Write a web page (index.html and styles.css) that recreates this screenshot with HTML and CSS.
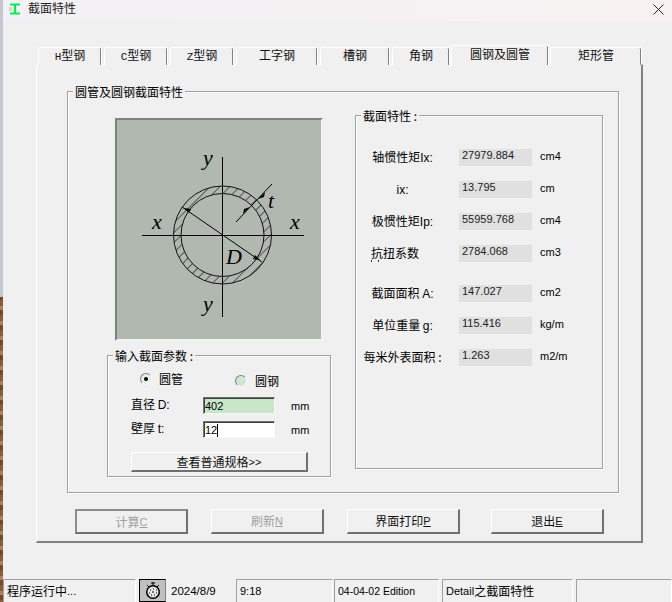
FILE: index.html
```html
<!DOCTYPE html>
<html lang="zh-CN">
<head>
<meta charset="utf-8">
<title>截面特性</title>
<link rel="stylesheet" href="styles.css">
</head>
<body>
<div class="screen">
  <div class="desktop-strip"></div>
  <div class="window">
    <header class="titlebar">
      <svg class="app-icon" width="12" height="12" viewBox="0 0 12 12">
        <path d="M1 1.5h10M1 10.5h10M6 1.5v9" stroke="#00f050" stroke-width="2.2" fill="none"/>
        <path d="M0 5h3M0 7h3" stroke="#e8a8a8" stroke-width="1"/>
      </svg>
      <span class="title-text">截面特性</span>
      <svg class="close-icon" width="11" height="11" viewBox="0 0 11 11">
        <path d="M.5 .5l10 10M10.5 .5l-10 10" stroke="#222" stroke-width="1" fill="none"/>
      </svg>
    </header>

    <main class="client">
      <nav class="tabs">
        <div class="tab"><span class="mono">H</span>型钢</div>
        <div class="tab"><span class="mono">C</span>型钢</div>
        <div class="tab"><span class="mono">Z</span>型钢</div>
        <div class="tab">工字钢</div>
        <div class="tab">槽钢</div>
        <div class="tab">角钢</div>
        <div class="tab active">圆钢及圆管</div>
        <div class="tab">矩形管</div>
      </nav>

      <section class="panel">
        <div class="group main-group">
          <div class="legend">圆管及圆钢截面特性</div>
          <div class="main-content">
            <div class="left-col">
              <div class="picture">
                <svg class="diagram" width="204" height="219" viewBox="117 120 204 219">
                  <defs>
                    <pattern id="hatch" width="7" height="7" patternUnits="userSpaceOnUse" patternTransform="rotate(45)">
                      <line x1="0" y1="0" x2="0" y2="7" stroke="#111" stroke-width="1.2"/>
                    </pattern>
                  </defs>
                  <path d="M173.5 235a49 49 0 1 0 98 0a49 49 0 1 0 -98 0zM181 235a41.5 41.5 0 1 1 83 0a41.5 41.5 0 1 1 -83 0z" fill="url(#hatch)" fill-rule="evenodd"/>
                  <circle cx="222.5" cy="235" r="49" fill="none" stroke="#111"/>
                  <circle cx="222.5" cy="235" r="41.5" fill="none" stroke="#111"/>
                  <g stroke="#000" stroke-width="1" shape-rendering="crispEdges">
                    <line x1="142" y1="235.5" x2="304" y2="235.5"/>
                    <line x1="222.5" y1="157" x2="222.5" y2="317"/>
                  </g>
                  <g stroke="#000" stroke-width="1">
                    <line x1="182" y1="207" x2="262" y2="262"/>
                    <line x1="236" y1="222" x2="272" y2="184"/>
                  </g>
                  <g fill="#000">
                    <path d="M184 208l7 1-2 4z"/>
                    <path d="M260 260l-7-1 2-4z"/>
                    <path d="M250 207l-7 7 1-5z"/>
                    <path d="M258 199l7-7-1 5z"/>
                  </g>
                  <g class="math">
                    <text x="203" y="165">y</text>
                    <text x="203" y="311">y</text>
                    <text x="152" y="229">x</text>
                    <text x="290" y="229">x</text>
                    <text x="268" y="208">t</text>
                    <text x="226" y="264">D</text>
                  </g>
                </svg>
              </div>

              <div class="group input-group">
                <div class="legend">输入截面参数 :</div>
                <div class="radio-row">
                  <label class="radio-item">
                    <span class="radio checked"></span>
                    <span>圆管</span>
                  </label>
                  <label class="radio-item lower">
                    <span class="radio tinted"></span>
                    <span>圆钢</span>
                  </label>
                </div>
                <div class="field-grid">
                  <span class="f-label">直径 <span class="lbl">D:</span></span>
                  <div class="field tinted-field"><span class="lat">402</span></div>
                  <span class="f-unit lat">mm</span>
                  <span class="f-label">壁厚 <span class="lbl">t:</span></span>
                  <div class="field"><span class="lat">12</span><span class="caret"></span></div>
                  <span class="f-unit lat">mm</span>
                </div>
                <div class="button wide">查看普通规格<span class="lat">&gt;&gt;</span></div>
              </div>
            </div>

            <div class="group result-group">
              <div class="legend">截面特性 :</div>
              <div class="result-grid">
                <span class="r-label">轴惯性矩<span class="lbl">Ix:</span></span>
                <span class="r-value">27979.884</span>
                <span class="r-unit">cm4</span>

                <span class="r-label"><span class="lbl">ix:</span></span>
                <span class="r-value">13.795</span>
                <span class="r-unit">cm</span>

                <span class="r-label">极惯性矩<span class="lbl">Ip:</span></span>
                <span class="r-value">55959.768</span>
                <span class="r-unit">cm4</span>

                <span class="r-label specks">抗扭系数</span>
                <span class="r-value">2784.068</span>
                <span class="r-unit">cm3</span>

                <span class="r-label spaced">截面面积 <span class="lbl">A:</span></span>
                <span class="r-value spaced">147.027</span>
                <span class="r-unit spaced">cm2</span>

                <span class="r-label">单位重量 <span class="lbl">g:</span></span>
                <span class="r-value">115.416</span>
                <span class="r-unit">kg/m</span>

                <span class="r-label">每米外表面积 :</span>
                <span class="r-value">1.263</span>
                <span class="r-unit narrow">m2/m</span>
              </div>
            </div>
          </div>
        </div>

        <div class="actions">
          <div class="button action default disabled">计算<u class="lat">C</u></div>
          <div class="button action disabled">刷新<u class="lat">N</u></div>
          <div class="button action">界面打印<u class="lat">P</u></div>
          <div class="button action exit">退出<u class="lat">E</u></div>
        </div>
      </section>
    </main>

    <footer class="statusbar">
      <div class="cell c-status">程序运行中<span class="lat">...</span></div>
      <div class="cell c-clock">
        <div class="clock-box">
          <svg width="18" height="18" viewBox="0 0 18 18">
            <path d="M9 0v3M7 1h4" stroke="#000" fill="none"/>
            <path d="M3 3l2 2M15 3l-2 2" stroke="#000" fill="none"/>
            <circle cx="9" cy="10" r="7" fill="#000"/>
            <circle cx="9" cy="10" r="5.5" fill="#e8e8e8"/>
            <path d="M6 8h1M9 7h1M12 8h1M5 11h1M8 10h2M12 11h1M7 13h1M10 13h1" stroke="#000"/>
          </svg>
        </div>
        <span class="date">2024/8/9</span>
      </div>
      <div class="cell c-time lat">9:18</div>
      <div class="cell c-edition">04-04-02 Edition</div>
      <div class="cell c-detail"><span class="lat">Detail</span>之截面特性</div>
      <div class="cell c-end"></div>
    </footer>
  </div>
</div>
</body>
</html>
```

FILE: styles.css
```css
* { box-sizing: border-box; }

html, body {
  margin: 0;
  padding: 0;
  height: 100%;
  overflow: hidden;
}

body {
  font-family: "Noto Sans CJK SC", "Liberation Sans", sans-serif;
  font-size: 12px;
  line-height: 14px;
  color: #000;
  background: #f0f0f0;
}

.lat {
  font-family: "Liberation Sans", sans-serif;
  font-size: 11px;
}

.lbl {
  font-family: "Liberation Sans", sans-serif;
  font-size: 12px;
}

.mono {
  font-family: "Liberation Mono", monospace;
  font-size: 11px;
}

.screen {
  display: flex;
  width: 672px;
  height: 602px;
}

.desktop-strip {
  flex: 0 0 3px;
  background:
    linear-gradient(#c5c8d0 0 297px, transparent 297px),
    repeating-linear-gradient(#8d5c35 0 6px, #a9825c 6px 10px, #734a2a 10px 15px);
}

.window {
  flex: 1;
  display: flex;
  flex-direction: column;
  min-width: 0;
  background: #f0f0f0;
}

/* Title bar */
.titlebar {
  flex: 0 0 21px;
  display: flex;
  align-items: center;
  padding: 0 8px 5px 6px;
  background: linear-gradient(90deg, #f2f1f5, #f8f2f2);
}

.app-icon { flex: none; margin-top: 2px; }

.title-text { margin-left: 7px; color: #222; }

.close-icon { margin-left: auto; margin-top: 2px; }

/* Client area */
.client {
  flex: 1;
  padding: 24px 0 0 33px;
  min-height: 0;
}

.tabs {
  display: grid;
  grid-template-columns: 64px 64px 64px 82px 70px 58px 96px 92px;
  column-gap: 2px;
  align-items: end;
  height: 20px;
  margin-left: 2px;
  margin-bottom: -1px;
  position: relative;
  z-index: 1;
}

.tab {
  height: 18px;
  text-align: center;
  border-top: 1px solid #fff;
  border-left: 1px solid #fff;
  border-right: 1px solid #fff;
  box-shadow: inset -1px 0 0 #808080;
  border-top-left-radius: 2px;
  border-top-right-radius: 2px;
  background: #f0f0f0;
  color: #111;
}

.tab.active {
  height: 20px;
  margin: 0 -1px;
  padding-top: 1px;
}

.panel {
  width: 607px;
  height: 479px;
  padding: 26px 0 0 30px;
  border-top: 1px solid #fff;
  border-left: 1px solid #fff;
  border-right: 2px solid #808080;
  border-bottom: 2px solid #808080;
}

/* Group boxes */
.group {
  border: 1px solid #a0a0a0;
  box-shadow: 1px 1px 0 #fff, inset 1px 1px 0 #fff;
}

.legend {
  width: fit-content;
  height: 14px;
  margin: -7px 0 0 5px;
  padding: 0 2px;
  background: #f0f0f0;
}

.main-group {
  width: 552px;
  height: 402px;
}

.main-content {
  display: flex;
  align-items: flex-start;
  gap: 24px;
  padding: 16px 0 0 39px;
}

.left-col {
  flex: 0 0 224px;
}

.picture {
  width: 208px;
  height: 223px;
  margin: 3px 0 14px 8px;
  background: #b0b8b0;
  border-style: solid;
  border-width: 2px;
  border-color: #808080 #f4f4f4 #f4f4f4 #808080;
}

.diagram { display: block; }

.math text {
  font-family: "Liberation Serif", serif;
  font-style: italic;
  font-size: 22px;
  fill: #000;
}

.input-group {
  width: 224px;
  height: 122px;
}

.radio-row {
  display: flex;
  align-items: flex-start;
  padding: 9px 0 0 32px;
  height: 34px;
}

.radio-item {
  display: flex;
  align-items: center;
  gap: 7px;
  width: 95px;
}

.radio-item.lower { margin-top: 2px; gap: 8px; }

.radio {
  width: 12px;
  height: 12px;
  border-radius: 50%;
  border: 1px solid;
  border-color: #808080 #f8f8f8 #f8f8f8 #808080;
  background: #e6f0e6;
  position: relative;
}

.radio.tinted { background: #cfe6cf; }

.radio.checked::after {
  content: "";
  position: absolute;
  left: 3px;
  top: 3px;
  width: 4px;
  height: 4px;
  border-radius: 50%;
  background: #000;
}

.field-grid {
  display: grid;
  grid-template-columns: 72px 72px 1fr;
  row-gap: 7px;
  grid-auto-rows: 17px;
  align-items: center;
  padding-left: 23px;
}

.f-label { margin-top: -2px; }

.f-unit { padding-left: 16px; }

.field {
  height: 17px;
  padding: 1px 0 0 1px;
  background: #fff;
  border: 1px solid;
  border-color: #707070 #f8f8f8 #f8f8f8 #707070;
  box-shadow: inset 1px 1px 0 #404040;
  display: flex;
  align-items: center;
}

.tinted-field { background: #c8e6c8; }

.caret {
  width: 1px;
  height: 13px;
  background: #000;
}

.button {
  display: flex;
  align-items: center;
  justify-content: center;
  background: #f0f0f0;
  border-style: solid;
  border-width: 1px 2px 2px 1px;
  border-color: #fff #707070 #707070 #fff;
  color: #111;
}

.button.wide {
  width: 177px;
  height: 20px;
  margin: 14px 0 0 23px;
}

/* Results */
.result-group {
  flex: 0 0 248px;
  height: 354px;
}

.result-grid {
  display: grid;
  grid-template-columns: 93px 73px 32px;
  grid-template-rows: repeat(4, 17px) 25px 17px 17px;
  column-gap: 10px;
  row-gap: 15px;
  padding-top: 26px;
  width: 208px;
}

.r-label {
  text-align: center;
  white-space: nowrap;
  line-height: 15px;
}

.r-label.specks {
  text-align: left;
  padding-left: 15px;
  height: 17px;
  background:
    linear-gradient(#333, #333) 15px 15px / 1px 2px no-repeat,
    linear-gradient(#333, #333) 22px 15px / 1px 2px no-repeat;
}

.r-value {
  background: #e0e0e0;
  height: 17px;
  padding-left: 3px;
  font-family: "Liberation Sans", sans-serif;
  font-size: 11px;
  line-height: 13px;
  color: #222;
}

.r-unit {
  margin-left: -2px;
  white-space: nowrap;
  font-family: "Liberation Sans", sans-serif;
  font-size: 11px;
  line-height: 15px;
}

.spaced { margin-top: 8px; }

/* Bottom buttons */
.actions {
  display: flex;
  gap: 23px;
  margin: 16px 0 0 8px;
}

.action {
  width: 113px;
  height: 25px;
}

.action.exit { margin-left: 8px; }

.action.disabled { color: #a0a0a0; }

.action.default {
  border-width: 2px;
  border-color: #8c8c8c #707070 #707070 #8c8c8c;
}

/* Status bar */
.statusbar {
  flex: 0 0 23px;
  display: flex;
  gap: 3px;
}

.cell {
  display: flex;
  align-items: center;
  height: 23px;
  padding-left: 3px;
  border-top: 1px solid #a0a0a0;
  border-left: 1px solid #a0a0a0;
  border-right: 1px solid #fff;
  white-space: pre;
}

.c-status { width: 133px; }

.c-clock {
  width: 94px;
  padding-left: 0;
  border: 0;
}

.clock-box {
  width: 27px;
  height: 23px;
  display: flex;
  align-items: center;
  justify-content: center;
  background: #c0c0c0;
  border: 1px solid #000;
  border-right-color: #808080;
}

.date {
  margin-left: 5px;
  font-family: "Liberation Sans", sans-serif;
  font-size: 11.5px;
}

.c-time { width: 97px; }

.c-edition {
  width: 105px;
  margin-left: -2px;
  font-family: "Liberation Sans", sans-serif;
  font-size: 10.5px;
}

.c-detail { width: 131px; }

.c-end { flex: 1; }
```
